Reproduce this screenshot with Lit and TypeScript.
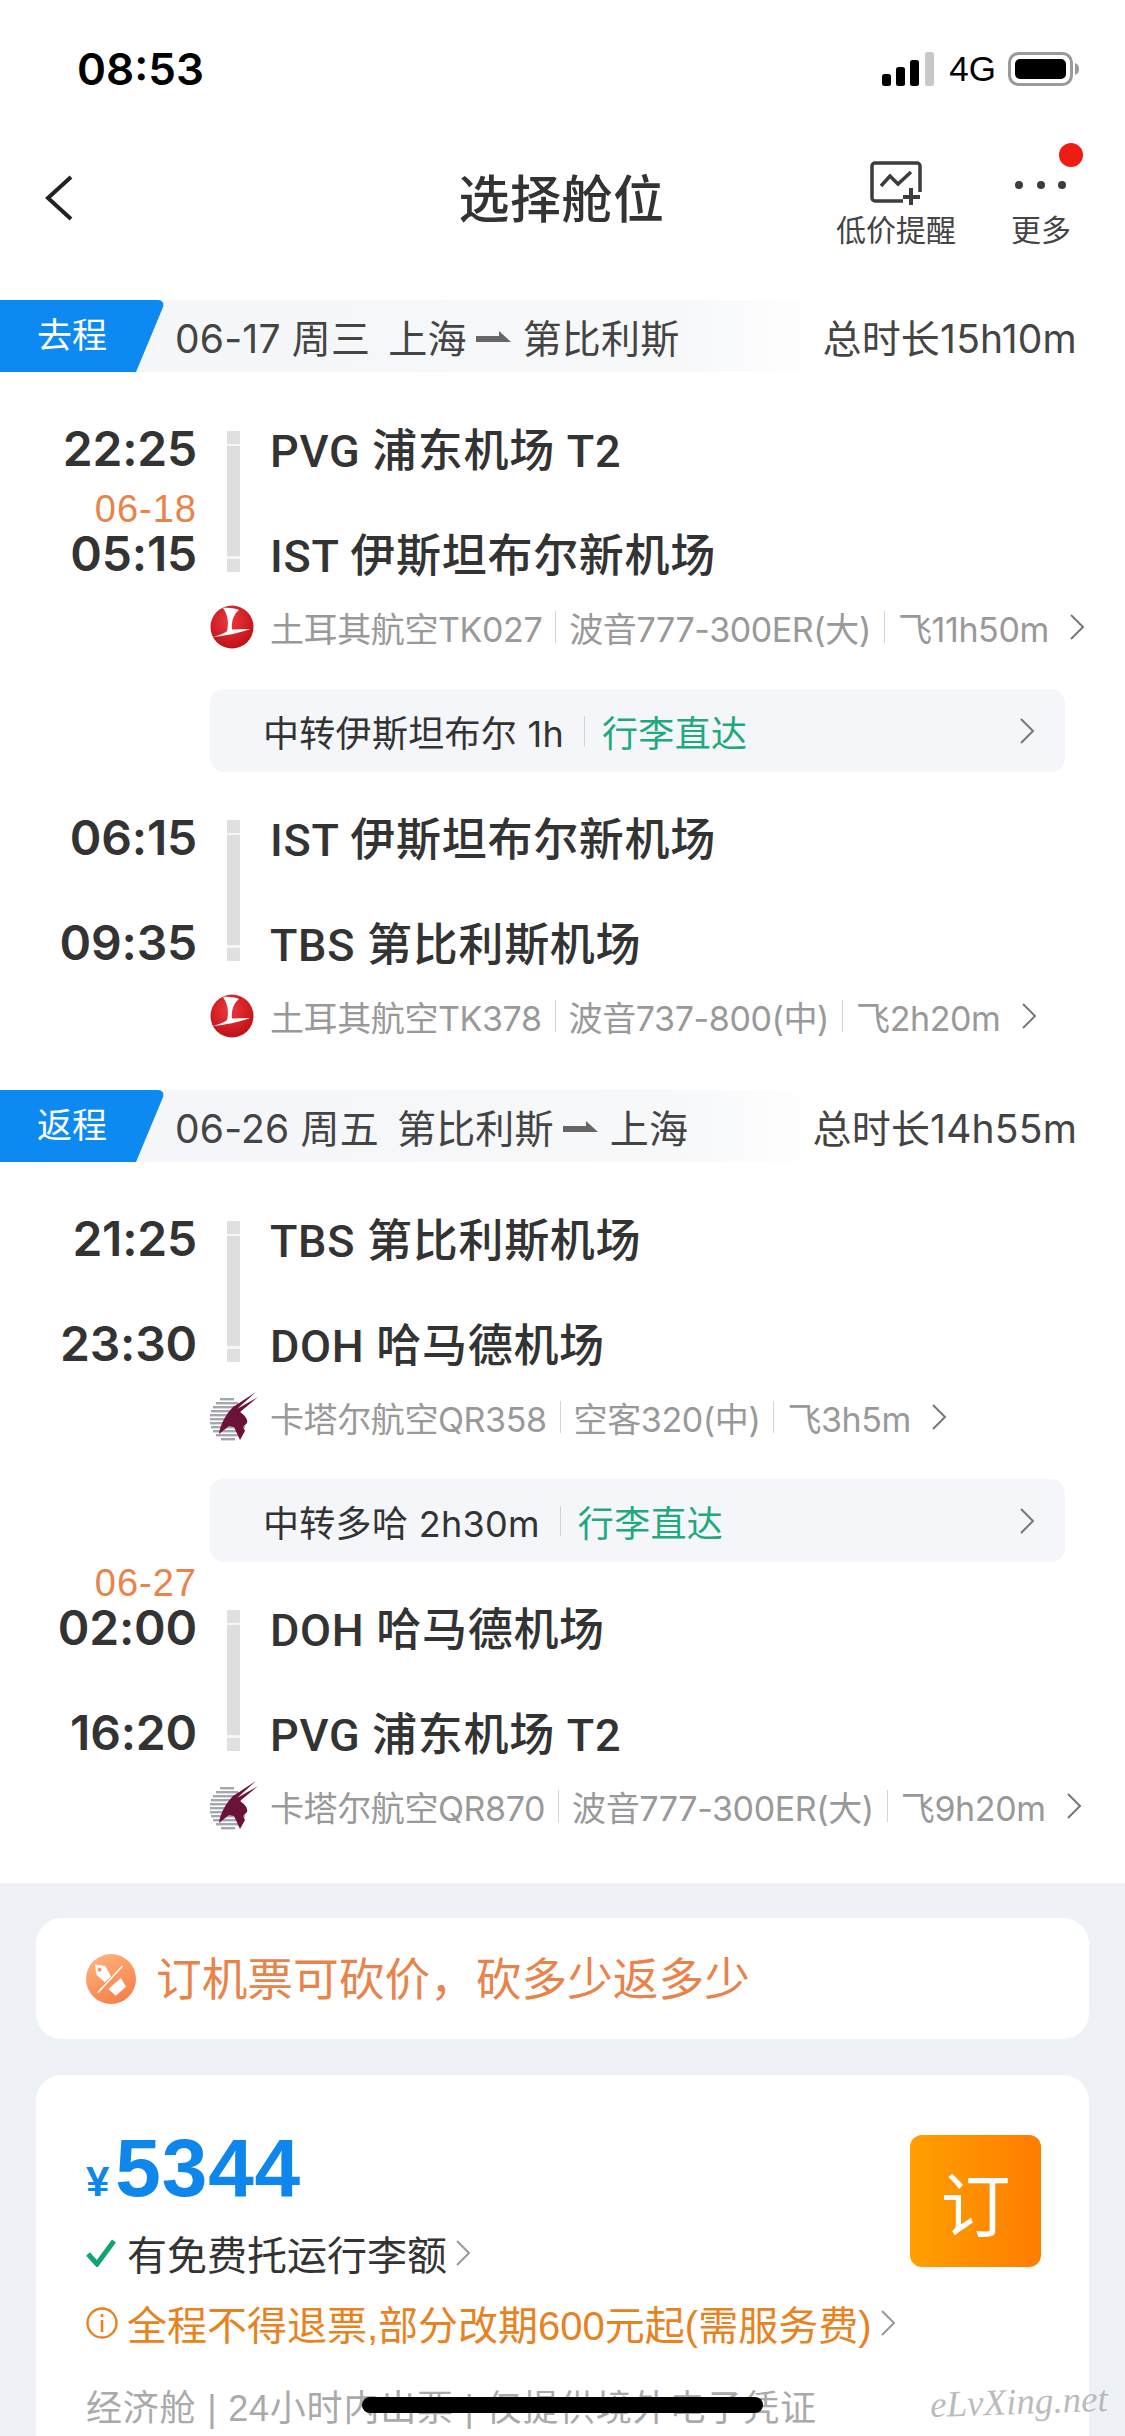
import { LitElement, html, css, svg } from "lit";
import { customElement } from "lit/decorators.js";

interface Stop {
  time: string;
  name: string;
  date?: string;
}

interface Leg {
  stops: Stop[];
  logo: "tk" | "qr";
  info: string[];
  transfer?: string;
}

interface Trip {
  tag: string;
  date: string;
  from: string;
  to: string;
  total: string;
  legs: Leg[];
}

const trips: Trip[] = [
  {
    tag: "去程",
    date: "06-17 周三",
    from: "上海",
    to: "第比利斯",
    total: "总时长15h10m",
    legs: [
      {
        stops: [
          { time: "22:25", name: "PVG 浦东机场 T2" },
          { time: "05:15", name: "IST 伊斯坦布尔新机场", date: "06-18" },
        ],
        logo: "tk",
        info: ["土耳其航空TK027", "波音777-300ER(大)", "飞11h50m"],
        transfer: "中转伊斯坦布尔 1h",
      },
      {
        stops: [
          { time: "06:15", name: "IST 伊斯坦布尔新机场" },
          { time: "09:35", name: "TBS 第比利斯机场" },
        ],
        logo: "tk",
        info: ["土耳其航空TK378", "波音737-800(中)", "飞2h20m"],
      },
    ],
  },
  {
    tag: "返程",
    date: "06-26 周五",
    from: "第比利斯",
    to: "上海",
    total: "总时长14h55m",
    legs: [
      {
        stops: [
          { time: "21:25", name: "TBS 第比利斯机场" },
          { time: "23:30", name: "DOH 哈马德机场" },
        ],
        logo: "qr",
        info: ["卡塔尔航空QR358", "空客320(中)", "飞3h5m"],
        transfer: "中转多哈 2h30m",
      },
      {
        stops: [
          { time: "02:00", name: "DOH 哈马德机场", date: "06-27" },
          { time: "16:20", name: "PVG 浦东机场 T2" },
        ],
        logo: "qr",
        info: ["卡塔尔航空QR870", "波音777-300ER(大)", "飞9h20m"],
      },
    ],
  },
];

const chevron = (color = "#777") => html`<svg class="chev" width="16" height="28" viewBox="0 0 16 28">
  <path d="M2 2l12 12L2 26" fill="none" stroke=${color} stroke-width="2" />
</svg>`;

const tkLogo = html`<svg class="logo" width="44" height="44" viewBox="0 0 44 44">
  <defs>
    <radialGradient id="tkg" cx="45%" cy="35%" r="70%">
      <stop offset="0" stop-color="#ee3a3f" />
      <stop offset="1" stop-color="#bb0d14" />
    </radialGradient>
  </defs>
  <circle cx="22" cy="22" r="21.5" fill="url(#tkg)" />
  <path
    d="M13 3C18 2.5 24 3 29 5 24 9 21 16 22 24.5L40 24C30 28 14 31 3 32 10 30 15 28 17 26 19 18 18 10 13 3Z"
    fill="#fff"
  />
</svg>`;

const qrStripes = [
  [8, 10, 14],
  [12, 6, 22],
  [16, 3, 26],
  [20, 1, 30],
  [24, 0, 32],
  [28, 0, 34],
  [32, 0, 36],
  [36, 1, 34],
  [40, 3, 30],
  [44, 6, 24],
  [48, 11, 14],
];

const qrLogo = html`<svg class="logo" width="48" height="54" viewBox="0 0 48 54">
  ${qrStripes.map(
    ([y, x, w]) => svg`<rect x=${x} y=${y} width=${w} height="2.4" fill="#a4a8ae" />`
  )}
  <path
    d="M23 17L46 2 27 19 48 7 30 22C36 26 38 30 37 33L33 37 35 41 30 50 24 37 19 36 9 44C10 36 15 25 23 17Z"
    fill="#6b1238"
  />
</svg>`;

const couponIcon = html`<svg width="50" height="50" viewBox="0 0 48 48">
  <defs>
    <linearGradient id="cpg" x1="0.2" y1="0" x2="0.7" y2="1">
      <stop offset="0" stop-color="#ffb27c" />
      <stop offset="1" stop-color="#f67e48" />
    </linearGradient>
  </defs>
  <circle cx="24" cy="24" r="24" fill="url(#cpg)" />
  <path d="M8.5 10L18.5 11.5 24 21.5 18 27 10 20Z" fill="#fff" />
  <circle cx="13" cy="15" r="2" fill="#f79a68" />
  <path d="M21.5 33.5L33.5 23 38.5 31.5 28.5 40Z" fill="#fff" />
  <path d="M35 11.5L11.5 37" stroke="#fff" stroke-width="1.4" />
</svg>`;

@customElement("app-root")
export class AppRoot extends LitElement {
  static styles = css`
    :host {
      display: block;
      position: relative;
      width: 1125px;
      height: 2436px;
      overflow: hidden;
      background: #fff;
      font-family: "Liberation Sans", "Noto Sans CJK SC", sans-serif;
      color: #333;
    }

    .status {
      height: 138px;
      display: flex;
      align-items: center;
      padding: 0 45px 0 77px;
      color: #000;
    }

    .clock {
      font-family: Inter, sans-serif;
      font-size: 44px;
      font-weight: 600;
      flex: 1;
    }

    .net {
      font-size: 35px;
      margin: 0 12px 0 14px;
    }

    .nav {
      height: 120px;
      display: grid;
      grid-template-columns: 1fr auto 1fr;
      align-items: center;
    }

    .back {
      margin-left: 45px;
    }

    .title {
      font-size: 51px;
      font-weight: 500;
      color: #333;
      margin: -4px 0 0 -2px;
      letter-spacing: 0.5px;
    }

    .actions {
      justify-self: end;
      align-self: start;
      display: flex;
      align-items: flex-start;
      gap: 55px;
      padding: 23px 54px 0 0;
    }

    .action {
      position: relative;
      display: flex;
      flex-direction: column;
      align-items: center;
      gap: 8px;
      font-size: 30px;
      color: #444;
      line-height: 32px;
    }

    .red-dot {
      position: absolute;
      width: 24px;
      height: 24px;
      border-radius: 50%;
      background: #ee1c13;
      top: -18px;
      right: -12px;
    }

    .head {
      display: flex;
      align-items: center;
      height: 72px;
      margin-top: 42px;
      background: linear-gradient(90deg, #f5f6f9 0, #f7f8fa 60%, #fff 73%);
      padding-right: 48px;
    }

    .trip + .trip .head {
      margin-top: 52px;
    }

    .tag {
      position: relative;
      width: 151px;
      height: 72px;
      box-sizing: border-box;
      padding-left: 37px;
      line-height: 72px;
      color: #fff;
      font-size: 35px;
      flex: none;
    }

    .tag span {
      position: relative;
      z-index: 1;
    }

    .tag::after {
      content: "";
      position: absolute;
      top: 0;
      left: -30px;
      right: 0;
      height: 72px;
      background: #0d8af1;
      border-radius: 0 8px 0 8px;
      transform: skewX(-22.6deg);
    }

    .route {
      flex: 1;
      margin-left: 24px;
      font-family: Inter, "Noto Sans CJK SC", sans-serif;
      font-size: 39px;
      letter-spacing: 0.2px;
      color: #444;
      display: flex;
      align-items: center;
      white-space: pre;
    }

    .from {
      margin-left: 18px;
    }

    .arrow {
      margin: 0 12px 0 9px;
    }

    .total {
      font-family: Inter, "Noto Sans CJK SC", sans-serif;
      font-size: 39px;
      letter-spacing: 0.2px;
      color: #444;
    }

    .leg {
      padding-top: 59px;
    }

    .leg.after {
      padding-top: 48px;
    }

    .stops {
      position: relative;
      display: flex;
      flex-direction: column;
      gap: 69px;
    }

    .stop {
      display: flex;
      align-items: center;
      height: 36px;
    }

    .time-col {
      width: 197px;
      text-align: right;
      font-family: Inter, sans-serif;
      font-size: 48px;
      line-height: 48px;
      font-weight: 600;
      letter-spacing: -0.2px;
      color: #333;
      flex: none;
    }

    .date {
      height: 0;
      display: flex;
      justify-content: flex-end;
      align-items: flex-end;
      font-family: "Liberation Sans", sans-serif;
      font-size: 38px;
      font-weight: 400;
      color: #e8834a;
      line-height: 38px;
      letter-spacing: 1px;
      transform: translateY(-2px);
    }

    .name {
      margin: -4px 0 0 73px;
      font-family: Roboto, "Noto Sans CJK SC", sans-serif;
      font-size: 45px;
      font-weight: 500;
      letter-spacing: 0.7px;
      color: #333;
    }

    .bar {
      position: absolute;
      left: 227px;
      top: 0;
      bottom: 0;
      width: 13px;
      background: linear-gradient(
        180deg,
        #e0e0e0 0,
        #e0e0e0 13px,
        #f6f6f6 13px,
        #f6f6f6 15px,
        #dedede 15px,
        #dedede calc(100% - 16px),
        #f6f6f6 calc(100% - 16px),
        #f6f6f6 calc(100% - 13px),
        #e0e0e0 calc(100% - 13px)
      );
    }

    .airline {
      display: flex;
      align-items: center;
      height: 44px;
      margin: 33px 0 0 210px;
      font-family: Inter, "Noto Sans CJK SC", sans-serif;
      font-size: 34px;
      letter-spacing: -0.4px;
      color: #999;
      white-space: nowrap;
    }

    .logo-box {
      width: 60px;
      display: flex;
      align-items: center;
      flex: none;
    }

    .sep {
      width: 1px;
      height: 32px;
      background: #d5d5d5;
      margin: 0 13px;
    }

    .chev {
      margin-left: 20px;
    }

    .transfer {
      display: flex;
      align-items: center;
      height: 83px;
      margin: 40px 60px 0 210px;
      padding: 0 30px 0 53px;
      border-radius: 14px;
      background: #f4f6fa;
      font-family: Inter, "Noto Sans CJK SC", sans-serif;
      font-size: 36px;
      letter-spacing: 0.3px;
      color: #333;
      white-space: pre;
    }

    .transfer .sep {
      height: 30px;
      margin: 0 17px 0 20px;
    }

    .green {
      color: #1fa97d;
      flex: 1;
    }

    .bottom {
      margin-top: 55px;
      height: 600px;
      padding: 35px 36px 0;
      background: #eef1f6;
    }

    .promo {
      height: 121px;
      display: flex;
      align-items: center;
      gap: 20px;
      padding-left: 50px;
      border-radius: 26px;
      background: #fff;
      font-size: 45.7px;
      color: #e8834a;
    }

    .promo span {
      margin-top: -5px;
    }

    .fare {
      margin-top: 36px;
      height: 500px;
      padding: 60px 48px 0 50px;
      border-radius: 26px;
      background: #fff;
      display: grid;
      grid-template-columns: 1fr 131px;
      align-content: start;
    }

    .price {
      display: flex;
      align-items: baseline;
      color: #0f86eb;
      font-weight: 700;
      font-size: 42px;
      height: 84px;
      padding-top: 3px;
    }

    .price b {
      font-size: 82px;
      line-height: 60px;
      margin-left: 6px;
      letter-spacing: 0.8px;
    }

    .book {
      height: 132px;
      border-radius: 12px;
      background: linear-gradient(90deg, #ff9f00, #ff7d00);
      color: #fff;
      font-size: 70px;
      display: flex;
      align-items: center;
      justify-content: center;
    }

    .line {
      grid-column: 1 / 3;
      display: flex;
      align-items: center;
      font-size: 40px;
      white-space: nowrap;
      height: 40px;
    }

    .line .chev {
      margin-left: 8px;
    }

    .line .ic {
      width: 41px;
      display: flex;
      flex: none;
    }

    .free {
      margin-top: -34px;
      color: #333;
    }

    .rule {
      margin-top: 30px;
      color: #e8821f;
    }

    .cabin {
      margin-top: 42px;
      color: #aaa;
      font-size: 36px;
      letter-spacing: 0.8px;
    }

    .home {
      position: absolute;
      left: 362px;
      top: 2397px;
      width: 401px;
      height: 16px;
      border-radius: 8px;
      background: #000;
    }

    .mark {
      position: absolute;
      left: 930px;
      top: 2380px;
      font-family: "Liberation Serif", serif;
      font-style: italic;
      font-size: 37px;
      color: rgba(165, 165, 165, 0.75);
      transform: rotate(-2deg);
    }
  `;

  private renderStop(s: Stop) {
    return html`<div class="stop">
      <div class="time-col">
        ${s.date ? html`<div class="date">${s.date}</div>` : ""}${s.time}
      </div>
      <div class="name">${s.name}</div>
    </div>`;
  }

  private renderLeg(leg: Leg, i: number) {
    return html`<div class="leg ${i > 0 ? "after" : ""}">
      <div class="stops">
        <div class="bar"></div>
        ${leg.stops.map((s) => this.renderStop(s))}
      </div>
      <div class="airline">
        <div class="logo-box">${leg.logo === "tk" ? tkLogo : qrLogo}</div>
        ${leg.info.map(
          (t, n) => html`${n > 0 ? html`<i class="sep"></i>` : ""}<span>${t}</span>`
        )}
        ${chevron()}
      </div>
      ${leg.transfer
        ? html`<div class="transfer">
            <span>${leg.transfer}</span><i class="sep"></i>
            <span class="green">行李直达</span>${chevron()}
          </div>`
        : ""}
    </div>`;
  }

  private renderTrip(t: Trip) {
    return html`<section class="trip">
      <div class="head">
        <div class="tag"><span>${t.tag}</span></div>
        <div class="route">
          <span>${t.date}</span><span class="from">${t.from}</span>
          <svg class="arrow" width="35" height="11" viewBox="0 0 35 11">
            <path d="M0 5H23V0L35 11H0Z" fill="#666" />
          </svg>
          <span>${t.to}</span>
        </div>
        <div class="total">${t.total}</div>
      </div>
      ${t.legs.map((l, i) => this.renderLeg(l, i))}
    </section>`;
  }

  render() {
    return html`
      <div class="status">
        <div class="clock">08:53</div>
        <svg width="53" height="34" viewBox="0 0 53 34">
          <rect x="0" y="22" width="9" height="12" rx="2.5" fill="#000" />
          <rect x="14" y="15" width="9" height="19" rx="2.5" fill="#000" />
          <rect x="28" y="8" width="9" height="26" rx="2.5" fill="#000" />
          <rect x="43" y="0" width="9" height="34" rx="2.5" fill="#c8c8c8" />
        </svg>
        <span class="net">4G</span>
        <svg width="72" height="34" viewBox="0 0 72 34">
          <rect x="1.5" y="1.5" width="62" height="31" rx="9" fill="none" stroke="#9a9a9a" stroke-width="3" />
          <rect x="7" y="7" width="51" height="20" rx="5" fill="#000" />
          <path d="M67 11c3 1 4 3 4 6s-1 5-4 6z" fill="#9a9a9a" />
        </svg>
      </div>

      <div class="nav">
        <svg class="back" width="28" height="46" viewBox="0 0 28 46">
          <path d="M26 2L3 23l23 21" fill="none" stroke="#222" stroke-width="4" />
        </svg>
        <div class="title">选择舱位</div>
        <div class="actions">
          <div class="action">
            <svg width="52" height="46" viewBox="0 0 52 46">
              <path
                d="M33 40H5a3 3 0 0 1-3-3V5a3 3 0 0 1 3-3h42a3 3 0 0 1 3 3v26"
                fill="none"
                stroke="#3d3d3d"
                stroke-width="3.5"
              />
              <path d="M11 25L20 15 28 23 41 11" fill="none" stroke="#3d3d3d" stroke-width="3.5" />
              <path d="M41 27V44M33 36H50" fill="none" stroke="#3d3d3d" stroke-width="4" />
            </svg>
            低价提醒
          </div>
          <div class="action">
            <div class="red-dot"></div>
            <svg width="52" height="46" viewBox="0 0 52 46">
              <circle cx="4" cy="24" r="4" fill="#3d3d3d" />
              <circle cx="26" cy="24" r="4" fill="#3d3d3d" />
              <circle cx="47" cy="24" r="4" fill="#3d3d3d" />
            </svg>
            更多
          </div>
        </div>
      </div>

      ${trips.map((t) => this.renderTrip(t))}

      <div class="bottom">
        <div class="promo">${couponIcon}<span>订机票可砍价，砍多少返多少</span></div>
        <div class="fare">
          <div class="price">¥<b>5344</b></div>
          <div class="book">订</div>
          <div class="line free">
            <span class="ic">
              <svg width="30" height="28" viewBox="0 0 30 28">
                <path d="M2 15L11 25 28 2" fill="none" stroke="#0fa56d" stroke-width="5" />
              </svg>
            </span>
            <span>有免费托运行李额</span>${chevron("#999")}
          </div>
          <div class="line rule">
            <span class="ic">
              <svg width="32" height="32" viewBox="0 0 32 32">
                <circle cx="16" cy="16" r="14.5" fill="none" stroke="#e8821f" stroke-width="2.4" />
                <path d="M16 13V25M16 7V10" stroke="#e8821f" stroke-width="2.6" />
              </svg>
            </span>
            <span>全程不得退票,部分改期600元起(需服务费)</span>${chevron("#999")}
          </div>
          <div class="line cabin">经济舱 | 24小时内出票 | 仅提供境外电子凭证</div>
        </div>
      </div>

      <div class="home"></div>
      <div class="mark">eLvXing.net</div>
    `;
  }
}
